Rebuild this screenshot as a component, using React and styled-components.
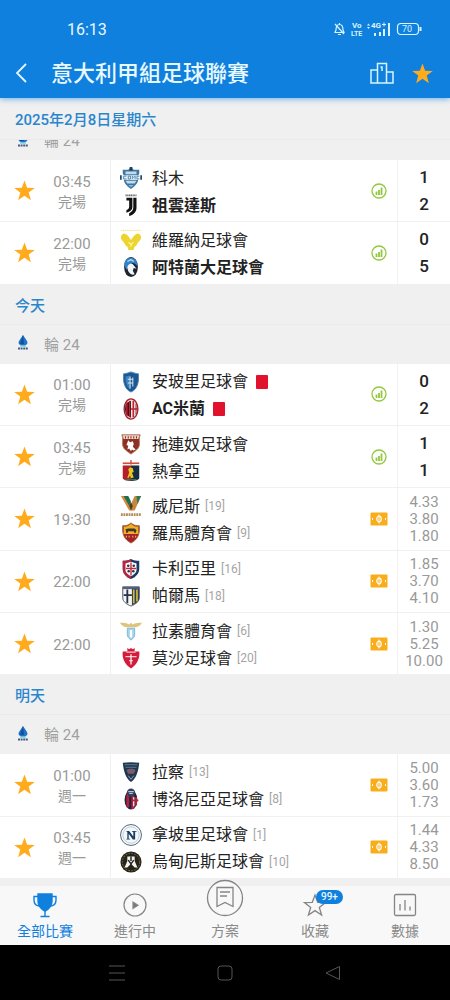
import React from 'react';
import styled, { createGlobalStyle } from 'styled-components';

const blue = '#0f80dd';
const SHIELD = 'M12 1C9 3 6 3 3 3v9c0 5 4 9 9 11 5-2 9-6 9-11V3c-3 0-6 0-9-2z';

const crests = {
    como: (
        <>
            <path d="M12 0l3 3h6v4l-1 2v3c0 6-4 9-8 12-4-3-8-6-8-12V9L3 7V3h6z" fill="#3f77a3" />
            <path d="M6 5h12v3H6zM6 15h12l-2 3H8z" fill="#c3dceb" />
            <path d="M9 19.500h6l-3 2.500z" fill="#8fb9d4" />
            <path d="M0 9h2v5H0zM22 9h2v5h-2z" fill="#234a68" />
            <path d="M2 9h20v5H2z" fill="#e7f1f7" />
            <path d="M7 10H4v3h3M9 10h2.500v3H9zM13.500 13v-3l1.500 1.500 1.500-1.500v3M21 10h-2.500v3H21" fill="none" stroke="#3f77a3" strokeWidth=".9" />
            <path d="M12 0v4" stroke="#1e3f5c" strokeWidth="3" />
        </>
    ),
    juventus: (
        <>
            <path d="M6 1.500h12" stroke="#666" strokeWidth="1.800" strokeDasharray="1.400 .5" />
            <path d="M7 4h6.500v10c0 3.500-2.500 5.500-6.500 6.500v-3c2-.8 3-2 3-4V7H7z" fill="#111" />
            <path d="M14.500 4h3.500v11c0 4-2.500 7.500-8 9v-3c3-1.500 4.500-3.500 4.500-6.500z" fill="#111" />
        </>
    ),
    verona: (
        <>
            <path d="M1 1.500h22" stroke="#eee08a" strokeWidth="1" strokeDasharray="1.500 .6" />
            <path d="M1 9c0-2 2-4 4-4 3 1 5 4 7 7 2-3 4-6 7-7 2 0 4 2 4 4 0 4-4 5-5 9-2 1-3 2-3 5H9c0-3-1-4-3-5-1-4-5-5-5-9z" fill="#edd52f" />
            <path d="M9 15c2 0 3 2 3 4 0-2 1-4 3-4" stroke="#fff8b0" strokeWidth="1.200" fill="none" />
        </>
    ),
    atalanta: (
        <>
            <ellipse cx="12" cy="12" rx="7.500" ry="11" fill="#1b2430" />
            <path d="M5 11c-1-6 3-9 7-9s7 3 7 9c-3-3-4-4-7-3-2 1-3 4-5 7z" fill="#2f83c9" />
            <path d="M8 12c1-3 4-5 6-3l4 5-3-1-1 3 2 4c-4 2-8-3-8-8z" fill="#f2f4f6" />
            <path d="M8 6l4-2 3 2" stroke="#b5d6f0" strokeWidth="1.500" fill="none" />
        </>
    ),
    empoli: (
        <>
            <path d="M12 1c3 1 6 2 8 2 1 9-1 17-8 20C5 20 3 12 4 3c2 0 5-1 8-2z" fill="#1c5792" stroke="#4686ba" />
            <path d="M6 6c0 6 1 11 5 14V5z" fill="#3c82bd" />
            <path d="M11 6v13M14 7v10M8.500 9H14M8.500 13H14" stroke="#d6e6f2" strokeWidth="1.100" />
        </>
    ),
    milan: (
        <>
            <ellipse cx="12" cy="12" rx="7.500" ry="11" fill="#efe9e9" stroke="#a81f2b" strokeWidth="1.500" />
            <path d="M7 5.500C5 9 5 15 7 18.500l5 3V3z" fill="#30131a" />
            <path d="M7.500 5v14M10.500 3v18" stroke="#c42331" strokeWidth="1.500" />
            <path d="M14.500 3v18M12 12h7" stroke="#c42331" strokeWidth="1.800" />
            <path d="M17.500 6v12" stroke="#7f2630" strokeWidth="1" />
        </>
    ),
    torino: (
        <>
            <path d="M2 2h20c-2 4 0 8-1 12-1 4-5 6-9 9-4-3-8-5-9-9C2 10 4 6 2 2z" fill="#8f3026" stroke="#b77a55" />
            <path d="M3 2.500h18l-1 4H4z" fill="#f0dccb" />
            <path d="M6 3.500v2.500M9 3.500v2.500M12 3.500v2.500M15 3.500v2.500M18 3.500v2.500" stroke="#8f3026" strokeWidth="1.200" />
            <path d="M9 8l2 2 3-1 1 3-1 3 3 3-2 1-2-1-1 2-2-3-2 1 1-4-2-1z" fill="#fff" />
        </>
    ),
    genoa: (
        <>
            <path d="M3 2h18v18H3z" fill="#f5f1ea" />
            <path d="M12 0v5M3 3.500h18" stroke="#d34a3e" strokeWidth="1.500" />
            <path d="M3 6h9v17c-4 0-8-1-9-3z" fill="#b41f28" />
            <path d="M12 6h9v14c-1 2-5 3-9 3z" fill="#172c42" />
            <path d="M9 10l2-2 3 1 1 4-2 1 2 5-3 1-1-3-2 3-1-1 2-5z" fill="#e7c623" />
            <path d="M6 21.500h12" stroke="#397a43" strokeWidth="1.500" />
        </>
    ),
    venezia: (
        <>
            <path d="M1 1h7l5 9v7h-3z" fill="#d88a3a" />
            <path d="M4 1h5l3 6-2 5z" fill="#1e6f52" />
            <path d="M23 1h-7l-5 11 1 5h4z" fill="#c8873c" />
            <path d="M18 1h5l-4 9z" fill="#2d785b" />
            <path d="M12 8l2 4-2 5-2-5z" fill="#493c2b" />
            <path d="M1 21.500h22" stroke="#b18a57" strokeWidth="3" strokeDasharray="2 .8" />
        </>
    ),
    roma: (
        <>
            <path d="M12 1c3 3 6 3 9 3 1 10-2 15-9 19C5 19 2 14 3 4c3 0 6 0 9-3z" fill="#a91e2b" stroke="#9c7034" />
            <path d="M12 2c3 3 5 3 8 3v8H4V5c3 0 5 0 8-3z" fill="#eeb024" />
            <path d="M6 8l3-1h7l2 2-1 3h-1l-1-2H9l-1 2H7z" fill="#41372f" />
            <path d="M7 15v2M10 15v2M14 15v2M17 15v2" stroke="#e5b64a" strokeWidth="1.200" />
        </>
    ),
    cagliari: (
        <>
            <path d={SHIELD} fill="#1b3963" />
            <path d="M12 1C9 3 6 3 3 3v9c0 5 4 9 9 11z" fill="#b72440" />
            <path d="M12 4l6 2v7c0 3-3 5-6 7-3-2-6-4-6-7V6z" fill="#fff" />
            <path d="M12 5v14M6.500 11.500h11" stroke="#c12b3f" strokeWidth="1.500" />
            <circle cx="9" cy="8.500" r="1.400" fill="#28334d" />
            <circle cx="15" cy="8.500" r="1.400" fill="#28334d" />
            <circle cx="9.500" cy="14.500" r="1.400" fill="#28334d" />
            <circle cx="14.500" cy="14.500" r="1.400" fill="#28334d" />
        </>
    ),
    parma: (
        <>
            <path d="M3 2h18v12c0 4-4 7-9 9-5-2-9-5-9-9z" fill="#f4f4f0" stroke="#47506a" />
            <path d="M3 2h18v2.500H3z" fill="#57617a" />
            <path d="M8 5v15M4 11h9" stroke="#26314e" strokeWidth="2" />
            <path d="M13 4h8v10c0 4-3 6-8 8z" fill="#2f4060" />
            <path d="M15 5v15M18.500 5v13" stroke="#d2be35" strokeWidth="1.800" />
        </>
    ),
    lazio: (
        <>
            <path d="M0 3c4 0 7 0 10 2l2-2 2 2c3-2 6-2 10-2-2 4-6 5-9 5H9C6 8 2 7 0 3z" fill="#dcc47c" />
            <path d="M8 9h8v7c0 3-2 4-4 6-2-2-4-3-4-6z" fill="#a5d3ec" stroke="#7cb4d6" />
            <path d="M12 11v8" stroke="#fff" strokeWidth="2.500" />
        </>
    ),
    monza: (
        <>
            <path d="M8 1l2 1.500L12 1l2 1.500L16 1v4h5c1 7-2 14-9 18.500C5 19 2 12 3 5h5z" fill="#d31c3c" />
            <path d="M7 5.500h10M6 10.500h12" stroke="#f7ccd3" strokeWidth="1.400" />
            <path d="M12 8v11M10 15h4" stroke="#fff" strokeWidth="1.300" />
        </>
    ),
    lecce: (
        <>
            <path d="M3 2c6-1 12-1 18 0-1 9-3 17-9 21C6 19 4 11 3 2z" fill="#203750" />
            <path d="M5 4h14M6 7h12" stroke="#4f6c87" strokeWidth="1.400" />
            <path d="M7 10c3-2 7-2 10 0l-2 4H9z" fill="#7b5b68" />
            <path d="M9 16l3 4 3-4" stroke="#9ab0c0" strokeWidth="1" fill="none" />
        </>
    ),
    bologna: (
        <>
            <ellipse cx="12" cy="13" rx="7" ry="10.500" fill="#1d2443" />
            <path d="M8.500 6v15M14 7v16" stroke="#b72238" strokeWidth="3" />
            <circle cx="12" cy="5" r="4.500" fill="#31405f" />
            <path d="M9 4h6M10 6h4" stroke="#b8c3d3" strokeWidth="1.200" />
            <path d="M15 10v10" stroke="#f5e9e9" strokeWidth="1.500" />
            <path d="M17.500 10v9M14 13.500h6" stroke="#b72238" strokeWidth="2" />
        </>
    ),
    napoli: (
        <>
            <circle cx="12" cy="12" r="11.400" fill="#fff" stroke="#3e5673" strokeWidth="1" />
            <circle cx="12" cy="12" r="9" fill="#f3f8fb" stroke="#8b9fb4" strokeWidth=".6" />
            <path d="M7 7.500h3l4.500 6V8.500H13v-1h5v1h-1.500V17H14L9.500 10.500v5.500H11v1H7v-1h1V8.500H7z" fill="#1e3d61" />
        </>
    ),
    udinese: (
        <>
            <circle cx="12" cy="12" r="11.500" fill="#26231a" />
            <circle cx="12" cy="12" r="9.500" fill="none" stroke="#6a6034" strokeWidth="1.200" strokeDasharray="2 1.200" />
            <path d="M8 6h8v5l3 7h-3l-4-4-4 4H5l3-7z" fill="#f3f3ef" />
            <path d="M12 6v5M9 10l3 4 3-4M12 14v4" stroke="#26231a" strokeWidth="1.600" fill="none" />
        </>
    ),
};

const days = [
    {
        title: '2025年2月8日星期六',
        scrolled: true,
        matches: [
            { time: '03:45', status: '完場', score: [1, 2], teams: [['como', '科木'], ['juventus', '祖雲達斯', { win: true }]] },
            { time: '22:00', status: '完場', score: [0, 5], teams: [['verona', '維羅納足球會'], ['atalanta', '阿特蘭大足球會', { win: true }]] },
        ],
    },
    {
        title: '今天',
        matches: [
            { time: '01:00', status: '完場', score: [0, 2], teams: [['empoli', '安玻里足球會', { red: true }], ['milan', 'AC米蘭', { win: true, red: true }]] },
            { time: '03:45', status: '完場', score: [1, 1], teams: [['torino', '拖連奴足球會'], ['genoa', '熱拿亞']] },
            { time: '19:30', odds: ['4.33', '3.80', '1.80'], teams: [['venezia', '威尼斯', { rank: 19 }], ['roma', '羅馬體育會', { rank: 9 }]] },
            { time: '22:00', odds: ['1.85', '3.70', '4.10'], teams: [['cagliari', '卡利亞里', { rank: 16 }], ['parma', '帕爾馬', { rank: 18 }]] },
            { time: '22:00', odds: ['1.30', '5.25', '10.00'], teams: [['lazio', '拉素體育會', { rank: 6 }], ['monza', '莫沙足球會', { rank: 20 }]] },
        ],
    },
    {
        title: '明天',
        matches: [
            { time: '01:00', status: '週一', odds: ['5.00', '3.60', '1.73'], teams: [['lecce', '拉察', { rank: 13 }], ['bologna', '博洛尼亞足球會', { rank: 8 }]] },
            { time: '03:45', status: '週一', odds: ['1.44', '4.33', '8.50'], teams: [['napoli', '拿坡里足球會', { rank: 1 }], ['udinese', '烏甸尼斯足球會', { rank: 10 }]] },
        ],
    },
];

const StarIcon = () => (
    <svg width="21" height="21" viewBox="0 0 24 24" fill="#ffab1c">
        <path d="M12 .5l3 8.300 8.800.2-7 5.400 2.500 8.600L12 18l-7.300 5 2.500-8.600-7-5.400 8.800-.2z" />
    </svg>
);

const LeagueIcon = () => (
    <svg width="12" height="16" viewBox="0 0 12 16">
        <path d="M6 0l4 6c1.500 3-1 4.500-4 4.500S.5 9 2 6z" fill="#1d74c9" />
        <path d="M6 0l1 9H3z" fill="#14509c" />
        <path d="M3 11h6" stroke="#36c3df" strokeWidth="1" />
        <path d="M1 13.500h10" stroke="#4a5a86" strokeWidth="2" strokeDasharray="2 .6" />
    </svg>
);

const StatsIcon = () => (
    <svg width="16" height="16" viewBox="0 0 16 16" fill="none" stroke="#92c83e">
        <circle cx="8" cy="8" r="7" strokeWidth="1.300" />
        <path d="M5.500 8.500V12M8 7V12M10.500 4.500V12" strokeWidth="1.800" />
    </svg>
);

const OddsIcon = () => (
    <svg width="18" height="14" viewBox="0 0 18 14">
        <rect x=".5" y=".5" width="17" height="13" rx="1" fill="#f9ad1b" />
        <ellipse cx="9" cy="7" rx="2.200" ry="2.800" fill="none" stroke="#fff" strokeWidth="1.200" />
        <path d="M9 2.500v9" stroke="#fff" strokeWidth=".9" />
        <path d="M2.500 6v2M15.500 6v2" stroke="#fff" />
    </svg>
);

const StatusIcons = () => (
    <svg width="90" height="16" viewBox="0 0 90 16" fill="none" stroke="#d9f4ff" strokeWidth="1.200">
        <path d="M3 9c0-4 1-5.500 3.500-5.500S10 5 10 9l1 2.500H2zM5 13.500h3M6.500 2v1.500M2 3l9 10" />
        <g fill="#d9f4ff" stroke="none" fontFamily="Roboto, sans-serif" fontWeight="700">
            <text x="19" y="7" fontSize="8">Vo</text>
            <text x="18" y="15" fontSize="7">LTE</text>
            <text x="38" y="7" fontSize="8">4G</text>
            <text x="69" y="11" fontSize="9" fontWeight="400">70</text>
            <path d="M34 4.500l1.500-2 1.500 2zM34 6l1.500 2 1.500-2z" />
            <path d="M41 12h2v3h-2zM46 11h2v4h-2zM50 8h2v7h-2zM55 2h2v13h-2z" />
        </g>
        <path d="M49 3.500h4M51 1.500v4" strokeWidth="1" />
        <rect x="64.500" y="2.500" width="21" height="11" rx="3.500" />
        <path d="M87.500 6v4" strokeWidth="2" />
    </svg>
);

const PodiumIcon = () => (
    <svg width="24" height="22" viewBox="0 0 24 22" fill="none" stroke="#d9f4ff" strokeWidth="1.500">
        <path d="M7.500 21V1.500h9V21M7.500 8H1v13h22V10h-6.500M10.500 5H12v4" />
    </svg>
);

const BackIcon = () => (
    <svg width="12" height="20" viewBox="0 0 12 20" fill="none" stroke="#e4f6ff" strokeWidth="1.800">
        <path d="M11 1L2 10l9 9" />
    </svg>
);

const TrophyIcon = () => (
    <svg width="24" height="26" viewBox="0 0 24 26" fill="none" stroke={blue} strokeWidth="1.400">
        <path d="M5 2h14v7c0 5-3 8-7 10-4-2-7-5-7-10z" fill={blue} />
        <path d="M5 4.500H1V8c0 4 2 6 6 6M19 4.500h4V8c0 4-2 6-6 6M12 18v6M7.500 24.500h9" />
    </svg>
);

const PlayIcon = () => (
    <svg width="24" height="26" viewBox="0 0 24 26" fill="none" stroke="#858585" strokeWidth="1.200">
        <circle cx="12" cy="13" r="11" />
        <path d="M10 10v6.500l5-3.200z" fill="#777" />
    </svg>
);

const PlanIcon = () => (
    <svg width="38" height="38" viewBox="0 0 38 38" fill="none" stroke="#858585" strokeWidth="1.300">
        <circle cx="19" cy="19" r="17.500" fill="#f8f8f8" />
        <path d="M11 8.500h16v19l-8-4-8 4zM14 13h10M14 17h7" />
    </svg>
);

const FavouriteIcon = () => (
    <svg width="24" height="26" viewBox="0 0 24 26" fill="none" stroke="#858585" strokeWidth="1.300">
        <path d="M12 3l2.700 7.300 7.800.3-6.200 4.800L18.600 23 12 18.600 5.400 23l2.300-7.600-6.200-4.800 7.800-.3z" />
    </svg>
);

const ChartIcon = () => (
    <svg width="24" height="26" viewBox="0 0 24 26" fill="none" stroke="#858585" strokeWidth="1.300">
        <rect x="1.500" y="2.500" width="21" height="21" rx="1.500" />
        <path d="M7 12v6.500M12 8v10.500M17 14.500v4" />
    </svg>
);

const tabs = [
    { label: '全部比賽', icon: <TrophyIcon />, active: true },
    { label: '進行中', icon: <PlayIcon /> },
    { label: '方案', icon: <PlanIcon />, raised: true },
    { label: '收藏', icon: <FavouriteIcon />, badge: '99+' },
    { label: '數據', icon: <ChartIcon /> },
];

const Team = ({ team }) => {
    const [crest, name, info = {}] = team;

    return (
        <TeamLine>
            <svg width="22" height="22" viewBox="0 0 24 24">{crests[crest]}</svg>
            <TeamName $bold={info.win}>{name}</TeamName>
            {info.rank && <Rank>[{info.rank}]</Rank>}
            {info.red && <RedCard />}
        </TeamLine>
    );
};

const Match = ({ match }) => (
    <MatchRow>
        <StarButton aria-label="收藏"><StarIcon /></StarButton>
        <Kickoff>
            <span>{match.time}</span>
            {match.status && <small>{match.status}</small>}
        </Kickoff>
        <Teams>
            {match.teams.map(team => <Team key={team[0]} team={team} />)}
        </Teams>
        <Extra>{match.odds ? <OddsIcon /> : <StatsIcon />}</Extra>
        <Results $odds={!!match.odds}>
            {(match.odds || match.score).map((value, i) => <span key={i}>{value}</span>)}
        </Results>
    </MatchRow>
);

const App = () => (
    <Page>
        <GlobalStyle />
        <Header>
            <StatusBar>
                <span>16:13</span>
                <StatusIcons />
            </StatusBar>
            <TitleBar>
                <IconButton aria-label="返回"><BackIcon /></IconButton>
                <h1>意大利甲組足球聯賽</h1>
                <IconButton aria-label="積分榜"><PodiumIcon /></IconButton>
                <IconButton aria-label="收藏"><StarIcon /></IconButton>
            </TitleBar>
        </Header>
        <Matches>
            {days.map(day => (
                <React.Fragment key={day.title}>
                    <DayTitle>{day.title}</DayTitle>
                    <RoundClip $scrolled={day.scrolled}>
                        <Round>
                            <LeagueIcon />
                            <span>輪 24</span>
                        </Round>
                    </RoundClip>
                    {day.matches.map((match, i) => <Match key={i} match={match} />)}
                </React.Fragment>
            ))}
        </Matches>
        <TabBar>
            {tabs.map(tab => (
                <Tab key={tab.label} $active={tab.active}>
                    <TabIcon $raised={tab.raised}>
                        {tab.icon}
                        {tab.badge && <Badge>{tab.badge}</Badge>}
                    </TabIcon>
                    {tab.label}
                </Tab>
            ))}
        </TabBar>
        <SystemBar>
            <button aria-label="選單">
                <svg width="18" height="18" viewBox="0 0 18 18"><path d="M1 2h16M1 9h16M1 16h16" /></svg>
            </button>
            <button aria-label="主頁">
                <svg width="18" height="18" viewBox="0 0 18 18"><rect x="2" y="2" width="14" height="14" rx="3" /></svg>
            </button>
            <button aria-label="返回">
                <svg width="18" height="18" viewBox="0 0 18 18"><path d="M15.500 2.500v13L2 9z" /></svg>
            </button>
        </SystemBar>
    </Page>
);

export default App;

const GlobalStyle = createGlobalStyle`
    * {
        box-sizing: border-box;
    }
    body {
        margin: 0;
        font-family: Roboto, "Noto Sans CJK TC", sans-serif;
        background: #f0f0f0;
    }
    h1, h2 {
        margin: 0;
    }
    button {
        padding: 0;
        border: 0;
        background: none;
        font: inherit;
        cursor: pointer;
    }
    svg {
        display: block;
        flex: none;
    }
`

const Page = styled.div`
    min-height: 100vh;
    display: flex;
    flex-direction: column;
`

const Header = styled.header`
    position: relative;
    background: ${blue};
    color: #e8f8ff;
    box-shadow: 0 1px 6px rgba(15, 128, 221, 0.6);
`

const StatusBar = styled.div`
    height: 50px;
    padding: 8px 27px 0 67px;
    display: flex;
    align-items: center;
    justify-content: space-between;
    font-size: 16px;
`

const TitleBar = styled.div`
    height: 48px;
    padding: 0 17px 2px 15px;
    display: flex;
    align-items: center;
    h1 {
        flex: 1;
        padding-top: 2px;
        margin-left: 24px;
        font-size: 22px;
        line-height: 32px;
        font-weight: 500;
    }
`

const IconButton = styled.button`
    & + & {
        margin-left: 18px;
    }
`

const Matches = styled.main`
    flex: 1;
    display: flex;
    flex-direction: column;
`

const DayTitle = styled.h2`
    height: 40px;
    padding: 0 15px;
    border-bottom: 1px solid #e9e9e9;
    color: #2a86cc;
    font-size: 15px;
    line-height: 42px;
    font-weight: 500;
    &:first-child {
        height: 42px;
        line-height: 44px;
    }
`

const RoundClip = styled.div`
    height: ${props => (props.$scrolled ? '20px' : '39px')};
    display: flex;
    flex-direction: column;
    justify-content: flex-end;
    overflow: hidden;
`

const Round = styled.div`
    flex: none;
    height: 39px;
    padding: 0 0 2px 17px;
    display: flex;
    align-items: center;
    gap: 15px;
    color: #a0a0a0;
    font-size: 15px;
`

const MatchRow = styled.article`
    flex: 1 0 62px;
    display: flex;
    background: #fff;
    border-bottom: 1px solid #f0f0f0;
`

const StarButton = styled.button`
    width: 48px;
    display: flex;
    align-items: center;
    justify-content: center;
`

const Kickoff = styled.div`
    width: 63px;
    padding: 2px 14px 0 0;
    display: flex;
    flex-direction: column;
    align-items: center;
    justify-content: center;
    border-right: 1px solid #f0f0f0;
    color: #999;
    font-size: 15px;
    line-height: 20px;
    small {
        font-size: 14px;
    }
`

const Teams = styled.div`
    flex: 1;
    padding: 2px 0 0 9px;
    display: flex;
    flex-direction: column;
    justify-content: center;
`

const TeamLine = styled.div`
    height: 27px;
    display: flex;
    align-items: center;
`

const TeamName = styled.span`
    margin-left: 10px;
    color: #222;
    font-size: 16px;
    line-height: 27px;
    font-weight: ${props => (props.$bold ? 700 : 400)};
`

const Rank = styled.span`
    margin-left: 5px;
    color: #a5a5a5;
    font-size: 12px;
`

const RedCard = styled.span`
    width: 12px;
    height: 14px;
    margin-left: 8px;
    border-radius: 1px;
    background: #e1132c;
`

const Extra = styled.div`
    width: 36px;
    display: flex;
    align-items: center;
    justify-content: center;
`

const Results = styled.div`
    width: 53px;
    padding-top: 1px;
    display: flex;
    flex-direction: column;
    align-items: center;
    justify-content: center;
    border-left: 1px solid #f2f2f2;
    color: ${props => (props.$odds ? '#999' : '#222')};
    font-size: ${props => (props.$odds ? '15px' : '17px')};
    line-height: ${props => (props.$odds ? '17px' : '27px')};
    font-weight: ${props => (props.$odds ? 400 : 500)};
`

const TabBar = styled.nav`
    height: 66px;
    display: flex;
    border-top: 7px solid #f0f0f0;
    background: #f8f8f8;
`

const Tab = styled.button`
    flex: 1;
    display: flex;
    flex-direction: column;
    align-items: center;
    justify-content: flex-end;
    padding-bottom: 4px;
    color: ${props => (props.$active ? blue : '#8a8a8a')};
    font-size: 14px;
    line-height: 20px;
`

const TabIcon = styled.span`
    position: relative;
    margin-bottom: ${props => (props.$raised ? '4px' : '3px')};
`

const Badge = styled.span`
    position: absolute;
    top: -2px;
    left: 13px;
    padding: 0 5px;
    border-radius: 8px;
    background: ${blue};
    color: #e8f8ff;
    font-size: 10px;
    line-height: 14px;
    font-weight: 500;
`

const SystemBar = styled.footer`
    height: 55px;
    padding: 0 14%;
    display: flex;
    background: #000;
    button {
        flex: 1;
        display: flex;
        align-items: center;
        justify-content: center;
    }
    svg {
        fill: none;
        stroke: #555;
        stroke-width: 1px;
    }
`
